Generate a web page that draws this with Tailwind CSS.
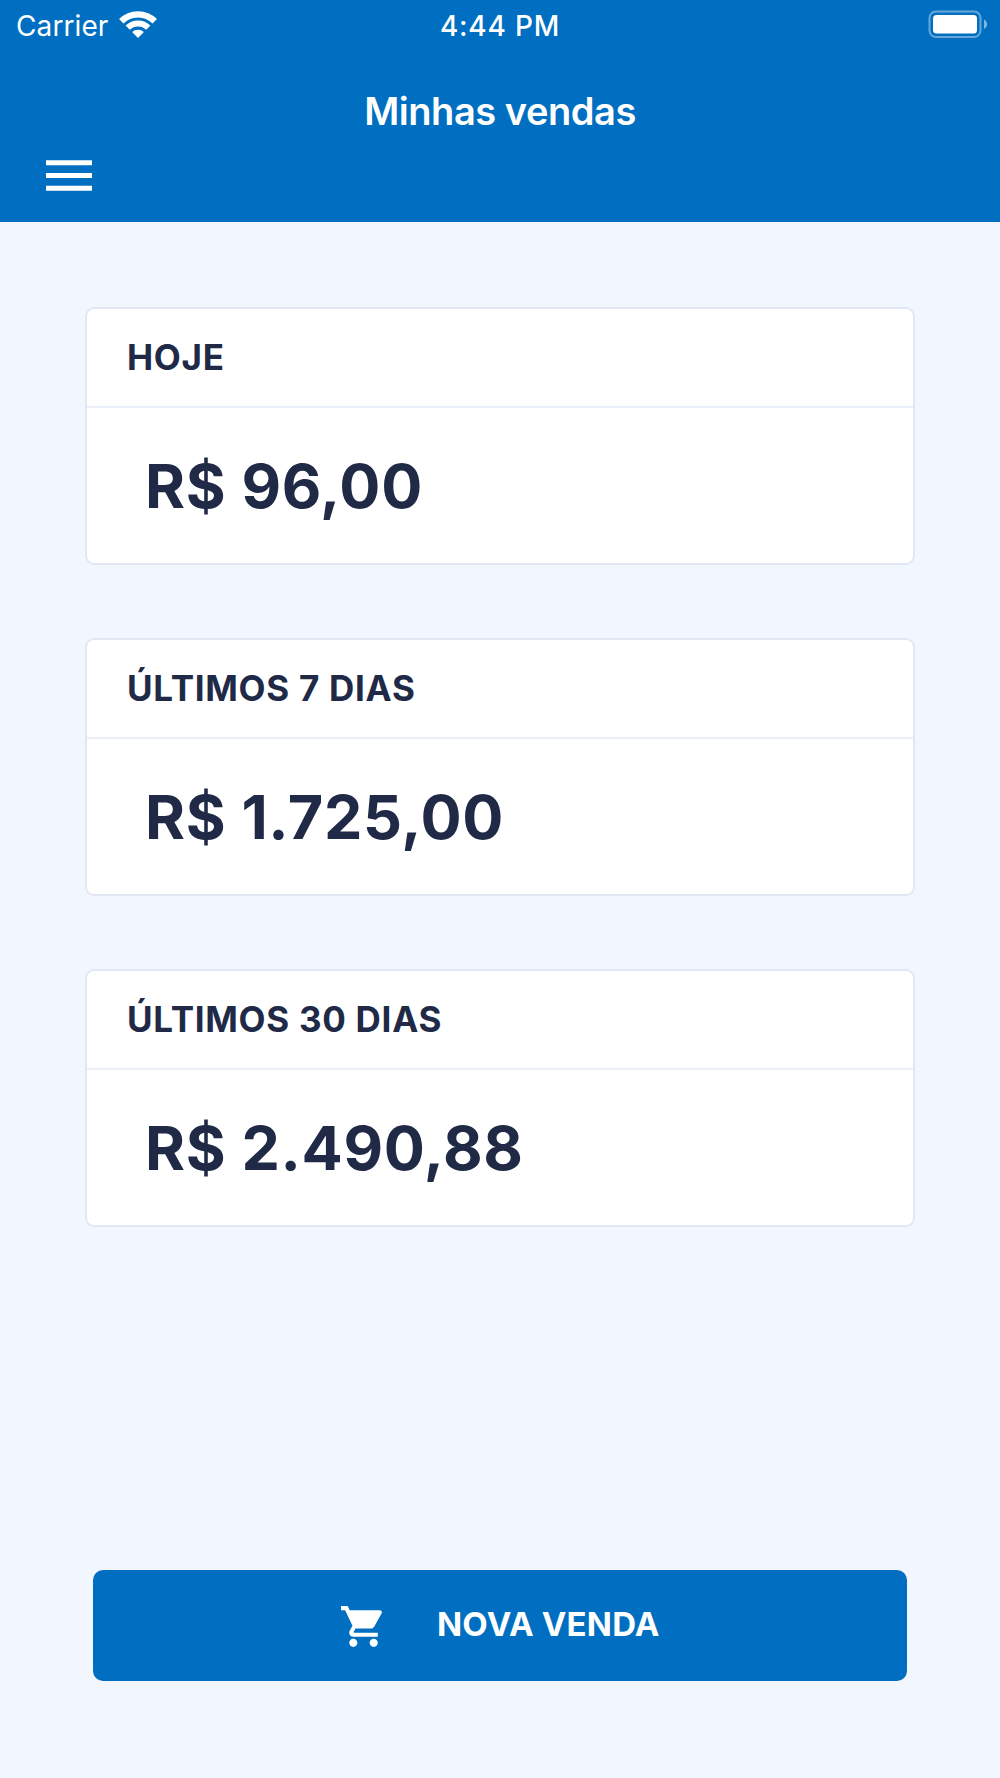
<!DOCTYPE html>
<html lang="pt-BR">

<head>
    <meta charset="UTF-8">
    <meta name="viewport" content="width=device-width, initial-scale=1.0">
    <title>Minhas vendas</title>
    <script src="https://cdn.jsdelivr.net/npm/@tailwindcss/browser@4"></script>
</head>

<body class="bg-[#f2f6ff] font-['Inter',sans-serif] text-[#202a47]">
    <div class="flex flex-col w-[1000px] h-[1778px]">
        <!-- Header -->
        <header class="bg-[#006fc1] text-white h-[222px] shrink-0">
            <!-- Status bar -->
            <div class="grid grid-cols-3 items-center h-[51px] pl-4 pr-[13px]">
                <div class="flex items-center gap-[11px]">
                    <span class="text-[28px] leading-[50px] tracking-[0.1px]">Carrier</span>
                    <svg class="w-[38px] h-7 -mt-[3px]" viewBox="0 0 38 28" fill="none">
                        <path d="M2.25 11.25a23.7 23.7 0 0 1 33.5 0" stroke="currentColor" stroke-width="6.2" />
                        <path d="M8.7 17.7a14.6 14.6 0 0 1 20.6 0" stroke="currentColor" stroke-width="6" />
                        <path d="M19 28l-5.9-5.9a8.4 8.4 0 0 1 11.8 0z" fill="currentColor" />
                    </svg>
                </div>
                <span class="mt-px pr-[3px] text-[28px] leading-[50px] font-medium tracking-[0.8px] text-center">4:44 PM</span>
                <svg class="w-[59px] h-7 -mt-[3px] justify-self-end" viewBox="0 0 59 28">
                    <rect x="1.500" y="1.5" width="51" height="25.5" rx="6.5" fill="none" stroke="#fff" stroke-opacity=".4"
                        stroke-width="2" />
                    <rect x="5" y="5" width="44" height="18.500" rx="3.5" fill="#fff" />
                    <path d="M56 9.500c4 2 4 7.500 0 9.500z" fill="#fff" fill-opacity=".5" />
                </svg>
            </div>
            <h1 class="mt-[36px] text-[38px] leading-[48px] font-semibold tracking-[-0.45px] text-center">Minhas vendas
            </h1>
            <button class="block mt-[25px] ml-[46px]" aria-label="Menu">
                <svg class="w-[46px] h-[31px]" viewBox="3 6 18 12" fill="currentColor">
                    <path d="M3 18h18v-2H3v2zm0-5h18v-2H3v2zm0-7v2h18V6H3z" />
                </svg>
            </button>
        </header>
        <!-- Sales totals -->
        <main class="flex flex-col gap-[73px] pt-[85px] px-[85px]">
            <section class="h-[258px] flex flex-col bg-white border-2 border-[#e2e8f3] rounded-[9px]">
                <h2
                    class="h-[99px] flex items-center pl-10 border-b-2 border-[#ebeff7] text-[35px] font-bold tracking-[0.72px]">
                    HOJE</h2>
                <p class="flex-1 flex items-center pl-[58px] pt-0.5 text-[61px] font-bold tracking-[0.65px]">R$ 96,00</p>
            </section>
            <section class="h-[258px] flex flex-col bg-white border-2 border-[#e2e8f3] rounded-[9px]">
                <h2
                    class="h-[99px] flex items-center pl-10 border-b-2 border-[#ebeff7] text-[35px] font-bold tracking-[0.72px]">
                    ÚLTIMOS 7 DIAS</h2>
                <p class="flex-1 flex items-center pl-[58px] pt-0.5 text-[61px] font-bold tracking-[0.65px]">R$ 1.725,00
                </p>
            </section>
            <section class="h-[258px] flex flex-col bg-white border-2 border-[#e2e8f3] rounded-[9px]">
                <h2
                    class="h-[99px] flex items-center pl-10 border-b-2 border-[#ebeff7] text-[35px] font-bold tracking-[0.72px]">
                    ÚLTIMOS 30 DIAS</h2>
                <p class="flex-1 flex items-center pl-[58px] pt-0.5 text-[61px] font-bold tracking-[0.65px]">R$ 2.490,88
                </p>
            </section>
        </main>
        <!-- New sale -->
        <footer class="mt-auto px-[93px] pb-[97px]">
            <button
                class="flex items-center gap-12 w-full h-[111px] pl-[246px] rounded-[10px] bg-[#006fc1] text-white">
                <svg class="w-[49px] h-[49px] mt-px" viewBox="0 0 24 24" fill="currentColor">
                    <path
                        d="M7 18c-1.1 0-1.99.9-1.99 2S5.9 22 7 22s2-.9 2-2-.9-2-2-2zM1 2v2h2l3.6 7.59-1.35 2.45c-.16.28-.25.61-.25.96 0 1.1.9 2 2 2h12v-2H7.42c-.14 0-.25-.11-.25-.25l.03-.12.9-1.63h7.45c.75 0 1.41-.41 1.75-1.03l3.58-6.49c.08-.14.12-.31.12-.48 0-.55-.45-1-1-1H5.21l-.94-2H1zm16 16c-1.1 0-1.99.9-1.99 2s.89 2 1.99 2 2-.9 2-2-.9-2-2-2z" />
                </svg>
                <span class="mb-px ml-px text-[33px] font-bold tracking-[0.2px]">NOVA VENDA</span>
            </button>
        </footer>
    </div>
</body>

</html>
